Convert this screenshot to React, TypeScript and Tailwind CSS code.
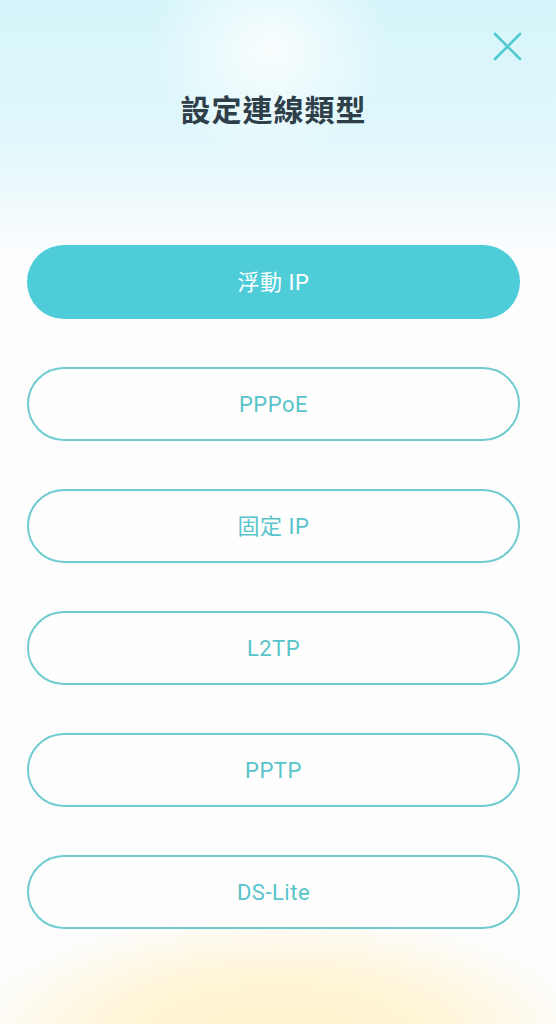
import React from "react";

const options = ["浮動 IP", "PPPoE", "固定 IP", "L2TP", "PPTP", "DS-Lite"];

export default function App() {
  return (
    <div
      className="relative w-[556px] h-[1024px] overflow-hidden bg-[#fdfdfe]"
      style={{ fontFamily: '"Noto Sans", "Noto Sans CJK TC", sans-serif' }}
    >
      {/* background glows */}
      <div className="absolute inset-x-0 top-0 h-[260px] bg-gradient-to-b from-[#d6f5fa] via-[#dff7fb] to-[#fdfdfe]" />
      <div className="absolute left-[150px] top-[-60px] w-[240px] h-[220px] rounded-full bg-[radial-gradient(closest-side,rgba(255,255,255,0.85),rgba(255,255,255,0))]" />
      <div className="absolute left-[-40px] right-[-40px] top-[910px] h-[260px] bg-[radial-gradient(closest-side,rgba(255,241,195,0.9),rgba(255,243,205,0.75)_55%,rgba(255,255,255,0))]" />

      <div className="relative flex flex-col">
        <div className="flex justify-end pt-[32px] pr-[34px]">
          <svg width="29" height="29" viewBox="0 0 29 29" fill="none">
            <path d="M2 2 L27 27 M27 2 L2 27" stroke="#4fc9d2" strokeWidth="2.6" strokeLinecap="round" />
          </svg>
        </div>
        <h1 className="mt-[29px] w-[547px] text-center text-[30px] leading-[40px] font-semibold text-[#2f3f4a] tracking-[1px]">
          設定連線類型
        </h1>
        <div
          className="mt-[115px] ml-[27px] w-[493px] flex flex-col gap-[48px]"
          style={{ fontFamily: 'Roboto, "Noto Sans CJK TC", sans-serif' }}
        >
          {options.map((o, i) =>
            i === 0 ? (
              <div
                key={o}
                className="h-[74px] rounded-full bg-[#4ecdd9] flex items-center justify-center text-white text-[22px] tracking-[0.5px]"
              >
                {o}
              </div>
            ) : (
              <div
                key={o}
                className="h-[74px] rounded-full border-[2px] border-[#6fcbcf] bg-white/40 flex items-center justify-center text-[#58c4c9] text-[22px] tracking-[0.5px]"
              >
                {o}
              </div>
            )
          )}
        </div>
      </div>
    </div>
  );
}
